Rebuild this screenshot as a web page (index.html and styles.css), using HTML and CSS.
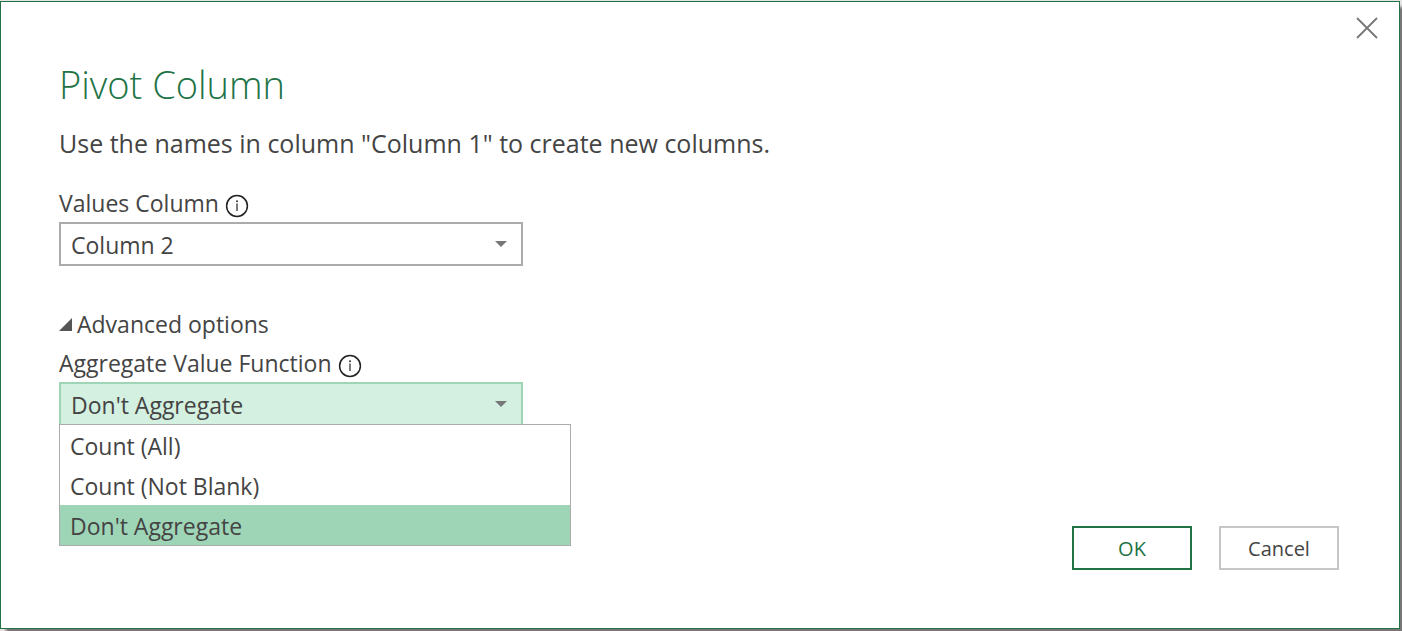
FILE: index.html
```html
<!DOCTYPE html>
<html lang="en">
<head>
<meta charset="utf-8">
<title>Pivot Column</title>
<link rel="stylesheet" href="styles.css">
</head>
<body>
<main class="dialog" role="dialog" aria-labelledby="dialog-title">
  <header class="titlebar">
    <button class="close" type="button" aria-label="Close">
      <svg width="22" height="22" viewBox="0 0 22 22" aria-hidden="true"><path d="M1 1 21 21M21 1 1 21" fill="none" stroke="#777" stroke-width="1.8"/></svg>
    </button>
  </header>
  <form class="content">
    <h1 class="title" id="dialog-title">Pivot Column</h1>
    <p class="intro">Use the names in column "Column 1" to create new columns.</p>

    <div class="label-row">
      <label for="values-column">Values Column</label>
      <button class="info" type="button" aria-label="About values column">
        <svg width="24" height="24" viewBox="0 0 24 24" aria-hidden="true"><circle cx="12" cy="12" r="10.4" fill="none" stroke="#222" stroke-width="1.5"/><path d="M12 9.5v7.5" stroke="#333" stroke-width="1.3"/><circle cx="12" cy="7.2" r="1" fill="#333"/></svg>
      </button>
    </div>
    <div class="picker">
      <select class="select" id="values-column"><option>Column 2</option></select>
      <svg class="arrow" width="12" height="6" viewBox="0 0 12 6" aria-hidden="true"><path d="M0 0h12L6 6z" fill="#777"/></svg>
    </div>

    <button class="advanced" type="button" aria-expanded="true">
      <svg width="13" height="13" viewBox="0 0 13 13" aria-hidden="true"><path d="M13 0v13H0z" fill="#555"/></svg>
      Advanced options
    </button>

    <div class="label-row">
      <label for="aggregate">Aggregate Value Function</label>
      <button class="info" type="button" aria-label="About aggregate value function">
        <svg width="24" height="24" viewBox="0 0 24 24" aria-hidden="true"><circle cx="12" cy="12" r="10.4" fill="none" stroke="#222" stroke-width="1.5"/><path d="M12 9.5v7.5" stroke="#333" stroke-width="1.3"/><circle cx="12" cy="7.2" r="1" fill="#333"/></svg>
      </button>
    </div>
    <div class="picker">
      <select class="select select-open" id="aggregate"><option>Don't Aggregate</option></select>
      <svg class="arrow" width="12" height="6" viewBox="0 0 12 6" aria-hidden="true"><path d="M0 0h12L6 6z" fill="#777"/></svg>
      <ul class="menu" role="listbox" aria-label="Aggregate Value Function">
        <li class="item" role="option">Count (All)</li>
        <li class="item" role="option">Count (Not Blank)</li>
        <li class="item item-selected" role="option" aria-selected="true">Don't Aggregate</li>
      </ul>
    </div>
  </form>
  <footer class="actions">
    <button class="button button-primary" type="button">OK</button>
    <button class="button" type="button">Cancel</button>
  </footer>
</main>
</body>
</html>
```
FILE: styles.css
```css
* {
  box-sizing: border-box;
}

body {
  margin: 0;
  min-height: 100vh;
  display: flex;
  padding: 1px 2px 2px 0;
  background: #e4e4e4;
  color: #444;
  font: 23px/32px "Open Sans", "Noto Sans", sans-serif;
  overflow: hidden;
}

button,
select {
  font: inherit;
  color: inherit;
}

.dialog {
  flex: 1;
  display: flex;
  flex-direction: column;
  background: #fff;
  border: 1px solid #217346;
  box-shadow: 6px 6px 3px #777;
}

.titlebar {
  display: flex;
  justify-content: flex-end;
  padding: 15px 21px 0 0;
}

.close,
.info,
.advanced {
  display: flex;
  align-items: center;
  padding: 0;
  border: 0;
  background: none;
}

.content {
  padding: 0 58px;
}

.title {
  margin: 18px 0 0;
  color: #217346;
  font-size: 38px;
  font-weight: 300;
  line-height: 54px;
}

.intro {
  margin: 16px 0 28px;
  font-size: 25px;
}

.label-row {
  display: flex;
  align-items: center;
  gap: 6px;
  height: 32px;
  margin-bottom: 3px;
}

.info {
  padding-top: 6px;
}

.picker {
  position: relative;
  width: 464px;
  max-width: 100%;
}

.select {
  display: block;
  width: 100%;
  height: 44px;
  padding: 2px 10px 0;
  appearance: none;
  border: 2px solid #ababab;
  border-radius: 0;
  background: #fff;
}

.select-open {
  border-color: #9fd5b7;
  background: #d3f0e0;
}

.arrow {
  position: absolute;
  top: 19px;
  right: 16px;
  pointer-events: none;
}

.advanced {
  gap: 5px;
  margin: 42px 0 7px;
}

.menu {
  position: absolute;
  top: 42px;
  left: 0;
  width: 512px;
  margin: 0;
  padding: 0;
  list-style: none;
  border: 1px solid #ababab;
  background: #fff;
}

.item {
  padding: 2px 10px 0;
  line-height: 38px;
}

.item-selected {
  background: #9fd5b7;
}

.actions {
  display: flex;
  justify-content: flex-end;
  gap: 27px;
  margin-top: auto;
  padding: 0 60px 58px;
}

.button {
  width: 120px;
  height: 44px;
  padding: 2px 0 0;
  border: 2px solid #c6c6c6;
  background: #fff;
  font-size: 20px;
}

.button-primary {
  border-color: #217346;
  color: #217346;
}
```
